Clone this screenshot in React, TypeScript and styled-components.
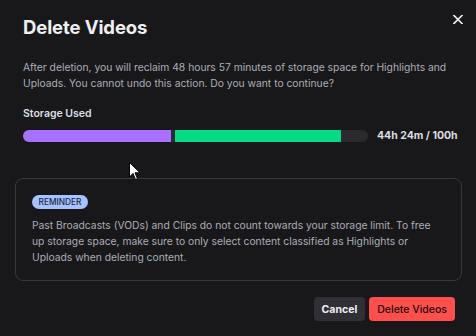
import React from "react";
import styled, { createGlobalStyle } from "styled-components";

const Global = createGlobalStyle`
  html, body { margin: 0; padding: 0; background: #18181b; }
  body { font-family: Inter, "Noto Sans", sans-serif; -webkit-font-smoothing: antialiased; }
`;

const Dialog = styled.div`
  position: relative;
  width: 476px;
  height: 336px;
  box-sizing: border-box;
  background: #18181b;
  padding: 15px 14px 0 15px;
  display: flex;
  flex-direction: column;
  overflow: hidden;
`;

const Header = styled.div`
  display: flex;
  justify-content: space-between;
  align-items: flex-start;
  padding-left: 8px;
`;

const Title = styled.h1`
  margin: 0;
  font-size: 18.5px;
  line-height: 24px;
  font-weight: 700;
  color: #efeff1;
  letter-spacing: -0.1px;
`;

const Close = styled.button`
  border: 0;
  background: transparent;
  padding: 0;
  margin: 0 -1px 0 0;
  width: 10px;
  height: 9px;
  display: flex;
  align-items: center;
  justify-content: center;
`;

const Body = styled.p`
  margin: 20px 0 0 8px;
  font-size: 10.3px;
  line-height: 16px;
  color: #adadb8;
`;

const Label = styled.div`
  margin: 15px 0 0 8px;
  font-size: 10.5px;
  line-height: 16px;
  font-weight: 600;
  color: #dedee3;
`;

const BarRow = styled.div`
  margin: 8px 0 0 8px;
  height: 12px;
  display: flex;
  align-items: center;
  gap: 9px;
`;

const Track = styled.div`
  width: 345px;
  height: 12px;
  border-radius: 6px;
  background: #2a2a2e;
  display: flex;
  overflow: hidden;
`;

const Segment = styled.div<{ $color: string; $gap?: number }>`
  height: 100%;
  background: ${(p) => p.$color};
  margin-left: ${(p) => p.$gap ?? 0}px;
`;

const Amount = styled.span`
  font-size: 10.5px;
  line-height: 12px;
  font-weight: 700;
  color: #dedee3;
  white-space: nowrap;
`;

const Reminder = styled.div`
  margin-top: 36px;
  border: 1px solid #37373d;
  border-radius: 8px;
  padding: 16px 16px 15px 16px;
  display: flex;
  flex-direction: column;
  align-items: flex-start;
  gap: 8px;
`;

const Badge = styled.span`
  display: inline-block;
  background: #a4c3ff;
  color: #1f2a44;
  font-size: 8.3px;
  font-weight: 500;
  line-height: 14px;
  padding: 0 6.5px;
  border-radius: 7px;
`;

const ReminderText = styled.p`
  margin: 0;
  font-size: 10.3px;
  line-height: 16px;
  color: #adadb8;
`;

const Footer = styled.div`
  margin-top: 16px;
  display: flex;
  justify-content: flex-end;
  gap: 4px;
  padding-right: 7px;
`;

const Button = styled.button<{ $variant: "secondary" | "danger" }>`
  border: 0;
  height: 24px;
  border-radius: 4px;
  padding: 0 8px;
  font-family: Inter, "Noto Sans", sans-serif;
  font-size: 10.5px;
  font-weight: ${(p) => (p.$variant === "danger" ? 500 : 700)};
  background: ${(p) => (p.$variant === "danger" ? "#ff4f4d" : "#2f2f35")};
  color: ${(p) => (p.$variant === "danger" ? "#1a0a0a" : "#efeff1")};
`;

const Cursor = styled.svg`
  position: absolute;
  left: 129px;
  top: 162px;
`;

export default function App() {
  const used = [
    { color: "#a970ff", width: 148, gap: 0 },
    { color: "#00db84", width: 166, gap: 4 },
  ];
  return (
    <>
      <Global />
      <Dialog>
        <Header>
          <Title>Delete Videos</Title>
          <Close aria-label="Close">
            <svg width="10" height="9" viewBox="0 0 10 9">
              <path d="M1 0.5L9 8.5M9 0.5L1 8.5" stroke="#efeff1" strokeWidth="1.6" strokeLinecap="square" />
            </svg>
          </Close>
        </Header>
        <Body>
          After deletion, you will reclaim 48 hours 57 minutes of storage space for Highlights and
          Uploads. You cannot undo this action. Do you want to continue?
        </Body>
        <Label>Storage Used</Label>
        <BarRow>
          <Track>
            {used.map((s, i) => (
              <Segment key={i} $color={s.color} $gap={s.gap} style={{ width: s.width }} />
            ))}
          </Track>
          <Amount>44h 24m / 100h</Amount>
        </BarRow>
        <Reminder>
          <Badge>REMINDER</Badge>
          <ReminderText>
            Past Broadcasts (VODs) and Clips do not count towards your storage limit. To free up
            storage space, make sure to only select content classified as Highlights or Uploads
            when deleting content.
          </ReminderText>
        </Reminder>
        <Footer>
          <Button $variant="secondary">Cancel</Button>
          <Button $variant="danger">Delete Videos</Button>
        </Footer>
        <Cursor width="12" height="19" viewBox="0 0 12 19">
          <path d="M0.5 0.5L0.5 15L4 11.5L6.5 17.5L8.5 16.6L6 10.8L11 10.8Z" fill="#fff" stroke="#000" strokeWidth="1" />
        </Cursor>
      </Dialog>
    </>
  );
}
